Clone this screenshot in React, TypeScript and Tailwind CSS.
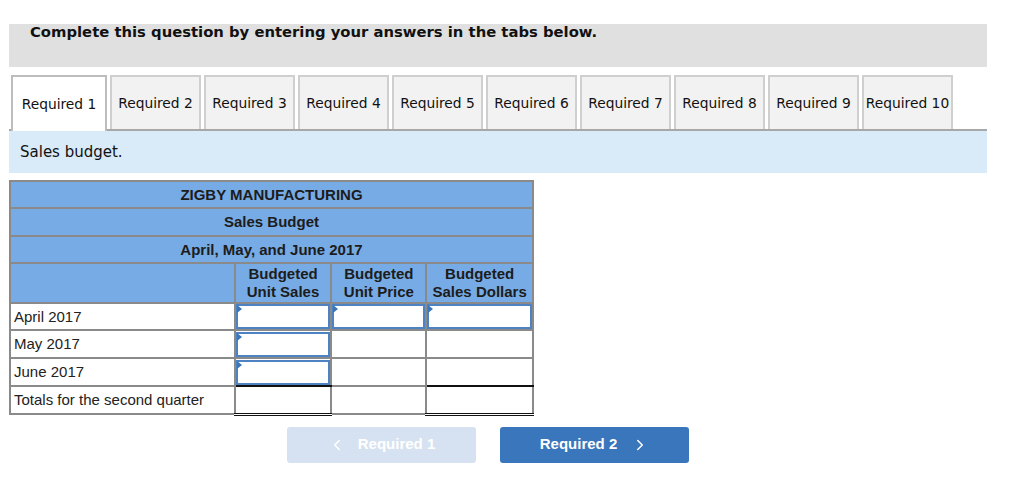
import { ChevronLeft, ChevronRight } from 'lucide-react';

// ── Data ──────────────────────────────────────────────────────────────────────

const tabs = Array.from({ length: 10 }, (_, i) => `Required ${i + 1}`);

const rows = [
  { label: 'April 2017', inputs: [true, true, true], h: 'h-[27px]' },
  { label: 'May 2017', inputs: [true, false, false], h: 'h-[28px]' },
  { label: 'June 2017', inputs: [true, false, false], h: 'h-[28px]' },
];

const verdana = "font-['DejaVu_Sans',Verdana,sans-serif]";
const arial = "font-['Liberation_Sans',Arial,sans-serif]";

// ── Pieces ────────────────────────────────────────────────────────────────────

function InputCell({ active, bottom }: { active: boolean; bottom?: string }) {
  return (
    <td className={`border-2 border-[#8a8a8a] bg-white p-0 ${bottom ?? ''}`}>
      {active ? (
        <div className="relative h-[25px] border-2 border-[#4d82c3] bg-white">
          <span className="absolute -left-[1px] -top-[1px] h-0 w-0 border-y-[4px] border-l-[5px] border-y-transparent border-l-[#3a76bb]" />
        </div>
      ) : null}
    </td>
  );
}

function Tabs() {
  return (
    <div className="mt-[9px] flex h-[55px] items-end border-b-2 border-[#a8a8a8] pl-[2px]">
      {tabs.map((t, i) =>
        i === 0 ? (
          <div
            key={t}
            className="relative -mb-[2px] flex h-[56px] w-[96px] items-center justify-center border-2 border-b-0 border-[#bdbdbd] bg-white text-[13.8px] text-[#111]"
          >
            {t}
          </div>
        ) : (
          <div
            key={t}
            className="ml-[3px] flex h-[54px] w-[91px] items-center justify-center border-2 border-b-0 border-[#cfcfcf] bg-[#f2f2f2] text-[13.8px] whitespace-nowrap text-[#111]"
          >
            {t}
          </div>
        ),
      )}
    </div>
  );
}

function BudgetTable() {
  const head = 'border-2 border-[#8a8a8a] bg-[#77abe5] p-0 text-center font-bold text-[15px] leading-[18px] text-[#1c1c1c]';
  const label = 'border-2 border-[#8a8a8a] px-[3px] py-0 text-[15px] leading-[18px] text-[#222]';
  return (
    <table className={`mt-[7px] w-[525px] border-collapse ${arial}`}>
      <colgroup>
        <col className="w-[226px]" />
        <col className="w-[97px]" />
        <col className="w-[95px]" />
        <col className="w-[107px]" />
      </colgroup>
      <tbody>
        <tr className="h-[27px]"><td colSpan={4} className={head}>ZIGBY MANUFACTURING</td></tr>
        <tr className="h-[28px]"><td colSpan={4} className={head}>Sales Budget</td></tr>
        <tr className="h-[27px]"><td colSpan={4} className={head}>April, May, and June 2017</td></tr>
        <tr className="h-[40px]">
          <td className={head} />
          <td className={`${head} leading-[17px]`}>Budgeted<br />Unit Sales</td>
          <td className={`${head} leading-[17px]`}>Budgeted<br />Unit Price</td>
          <td className={`${head} leading-[17px]`}>Budgeted<br />Sales Dollars</td>
        </tr>
        {rows.map((r, ri) => (
          <tr key={r.label} className={r.h}>
            <td className={label}>{r.label}</td>
            {r.inputs.map((on, ci) => (
              <InputCell
                key={ci}
                active={on}
                bottom={ri === 2 && ci !== 1 ? 'border-b-[#111]' : ''}
              />
            ))}
          </tr>
        ))}
        <tr className="h-[28px]">
          <td className={label}>Totals for the second quarter</td>
          <td className="border-2 border-b-[3px] border-[#8a8a8a] border-b-[#111] border-t-[#111] [border-bottom-style:double] bg-white p-0" />
          <td className="border-2 border-[#8a8a8a] bg-white p-0" />
          <td className="border-2 border-b-[3px] border-[#8a8a8a] border-b-[#111] [border-bottom-style:double] bg-white p-0" />
        </tr>
      </tbody>
    </table>
  );
}

// ── Page ──────────────────────────────────────────────────────────────────────

export default function App() {
  return (
    <div className="h-[495px] w-[1024px] bg-white pt-[24px]">
      <div className="ml-[9px] w-[978px]">
        <div className={`h-[43px] bg-[#e0e0e0] pl-[21px] pt-[0px] text-[14.8px] font-bold leading-[16px] text-[#111] ${verdana}`}>
          Complete this question by entering your answers in the tabs below.
        </div>

        <div className={verdana}>
          <Tabs />
          <div className="flex h-[42px] items-center bg-[#d9eaf8] pl-[11px] text-[15px] text-[#111]">
            Sales budget.
          </div>
        </div>

        <BudgetTable />

        <div className={`mt-[11px] flex gap-[24px] pl-[278px] ${arial}`}>
          <button className="flex h-[36px] w-[189px] items-center justify-center gap-[12px] rounded-[3px] bg-[#d6e2f1] text-[15px] font-bold text-white">
            <ChevronLeft size={18} strokeWidth={2} />
            Required 1
          </button>
          <button className="flex h-[36px] w-[189px] items-center justify-center gap-[14px] rounded-[3px] bg-[#3a76bb] text-[15px] font-bold text-white">
            Required 2
            <ChevronRight size={18} strokeWidth={2} />
          </button>
        </div>
      </div>
    </div>
  );
}
